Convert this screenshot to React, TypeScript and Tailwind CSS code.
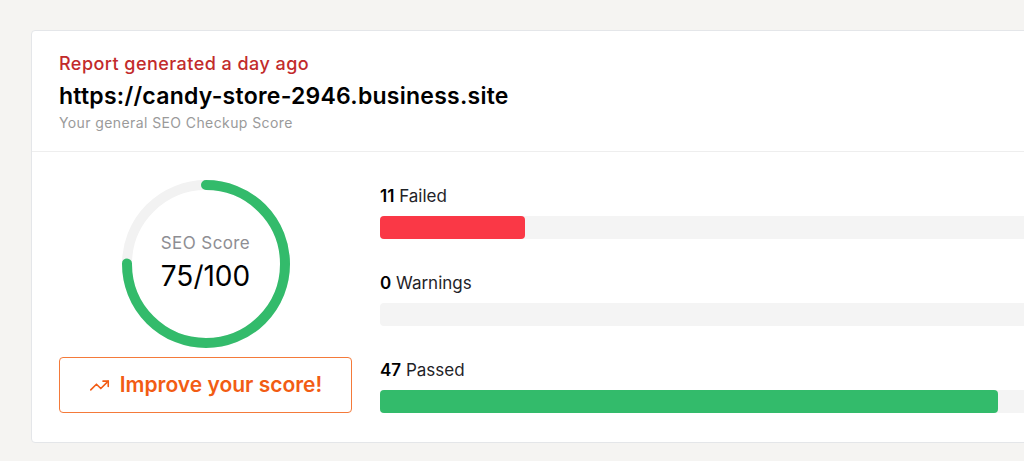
import { TrendingUp } from "lucide-react";

const rows = [
    { count: 11, label: "Failed", pct: 19, bar: "bg-[#fa3846]" },
    { count: 0, label: "Warnings", pct: 0, bar: "bg-[#f5b400]" },
    { count: 47, label: "Passed", pct: 81, bar: "bg-[#33bb6b]" },
];

function ScoreRing({ score }: { score: number }) {
    const r = 79;
    const c = 2 * Math.PI * r;
    return (
        <div className="relative w-[168px] h-[168px]">
            <svg width="168" height="168" viewBox="0 0 168 168" className="-rotate-90">
                <circle cx="84" cy="84" r={r} fill="none" stroke="#f2f2f2" strokeWidth="10" />
                <circle
                    cx="84"
                    cy="84"
                    r={r}
                    fill="none"
                    stroke="#33bb6b"
                    strokeWidth="10"
                    strokeLinecap="round"
                    strokeDasharray={`${(c * score) / 100} ${c}`}
                />
            </svg>
            <div className="absolute inset-0 flex flex-col items-center justify-center">
                <span className="text-[17px] leading-6 tracking-[0.4px] text-[#8e8e93] mt-[-4px]">SEO Score</span>
                <span className="text-[28px] leading-9 text-black mt-[3px]">{score}/100</span>
            </div>
        </div>
    );
}

export default function App() {
    return (
        <div
            className="w-full h-[461px] overflow-hidden bg-[#f5f4f2] pt-[30px] pl-[31px]"
            style={{ fontFamily: "Inter, 'Noto Sans', sans-serif" }}
        >
            <div className="w-[1140px] bg-white border border-[#e4e6e9] rounded-[4px]">
                <div className="px-[27px] pt-[21px] pb-[18px] border-b border-[#eeeeee]">
                    <div className="text-[18px] leading-[24px] tracking-[0.45px] font-medium text-[#c22b2b]">
                        Report generated a day ago
                    </div>
                    <div className="text-[23px] leading-[32px] tracking-[0.25px] font-semibold text-black mt-[4px]">
                        https://candy-store-2946.business.site
                    </div>
                    <div className="text-[14px] leading-[20px] tracking-[0.4px] text-[#9a9a9a] mt-[1px]">
                        Your general SEO Checkup Score
                    </div>
                </div>
                <div className="flex gap-[28px] px-[27px] pt-[28px] pb-[29px]">
                    <div className="w-[293px] flex flex-col items-center">
                        <ScoreRing score={75} />
                        <button className="mt-[9px] w-full h-[56px] flex items-center justify-center gap-[10px] border border-[#f47a3a] rounded-[4px] text-[#f25c14] text-[21px] font-semibold">
                            <TrendingUp size={21} strokeWidth={1.8} />
                            Improve your score!
                        </button>
                    </div>
                    <div className="flex-1 pt-[4px]">
                        {rows.map((row, i) => (
                            <div key={row.label} className={i > 0 ? "mt-[32px]" : ""}>
                                <div className="text-[17px] leading-6 text-[#1f2328]">
                                    <span className="font-semibold text-black">{row.count}</span> {row.label}
                                </div>
                                <div className="mt-[8px] h-[23px] rounded-[4px] bg-[#f4f4f4]">
                                    {row.pct > 0 && (
                                        <div
                                            className={`h-full rounded-[4px] ${row.bar}`}
                                            style={{ width: `${row.pct}%` }}
                                        />
                                    )}
                                </div>
                            </div>
                        ))}
                    </div>
                </div>
            </div>
        </div>
    );
}
